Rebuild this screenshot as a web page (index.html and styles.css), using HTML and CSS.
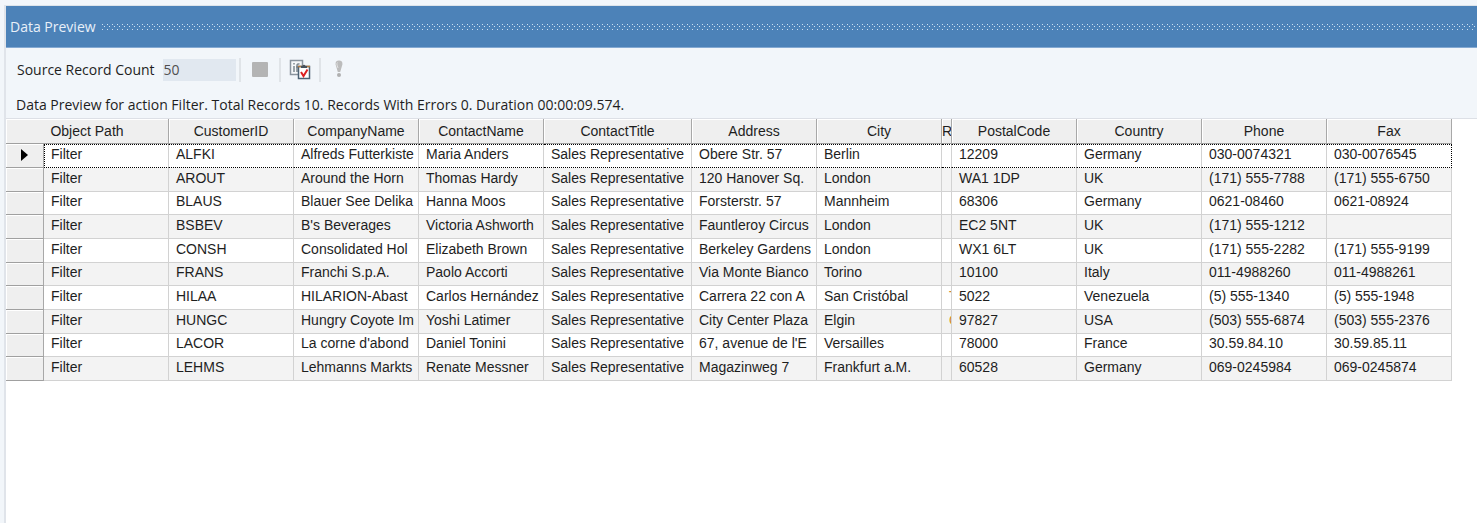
FILE: index.html
```html
<!DOCTYPE html>
<html lang="en">
<head>
    <meta charset="UTF-8">
    <meta name="viewport" content="width=device-width, initial-scale=1.0">
    <title>Data Preview</title>
    <link rel="stylesheet" href="styles.css">
</head>
<body>
    <div class="panel">
        <div class="panel-header">
            <h1>Data Preview</h1>
            <div class="grip"></div>
        </div>

        <div class="toolbar">
            <label for="record-count">Source Record Count</label>
            <input id="record-count" class="count" type="text" value="50" readonly>
            <span class="separator"></span>
            <button class="tool" type="button" aria-label="Stop">
                <svg width="20" height="22" viewBox="0 0 20 22">
                    <rect x="2" y="3" width="16" height="15" rx="1" fill="#b4b4b4"/>
                </svg>
            </button>
            <span class="separator"></span>
            <button class="tool" type="button" aria-label="Verify">
                <svg width="22" height="22" viewBox="0 0 22 22">
                    <rect x="1.5" y="1.5" width="12" height="14" fill="#f6f8fa" stroke="#8a949e" stroke-width="1.5"/>
                    <path d="M5 4v1.500M5 7v6M8 13V6.500q0-2 2.500-1.500M7 8h3" fill="none" stroke="#7c868e" stroke-width="1.500"/>
                    <rect x="9.500" y="7.500" width="11" height="12" fill="#fff" stroke="#4c6274" stroke-width="1.500"/>
                    <path d="M9 7.500h12" stroke="#b07a40" stroke-width="1.500"/>
                    <path d="M12 9V7h1.500Q15 4.500 16.500 7H18V9z" fill="#46515c"/>
                    <path d="M12 13l2.500 4L18.500 10.500" fill="none" stroke="#dc2020" stroke-width="2"/>
                </svg>
            </button>
            <span class="separator"></span>
            <button class="tool" type="button" aria-label="Errors">
                <svg width="20" height="22" viewBox="0 0 20 22">
                    <path d="M9 1.500c-2.500 0-3.800 1.500-3.400 4L7.800 13h2.400l2.200-7.500c.4-2.500-.9-4-3.400-4z" fill="#bcbcbc"/>
                    <path d="M7.500 3.500q-1 1-.5 2.500l1 3" fill="none" stroke="#e2e2e2"/>
                    <circle cx="9" cy="16" r="2" fill="#b0b0b0"/>
                </svg>
            </button>
        </div>

        <p class="status">Data Preview for action Filter. Total Records 10. Records With Errors 0. Duration 00:00:09.574.</p>

        <div class="grid">
            <table>
                <colgroup>
                    <col class="col-marker">
                    <col class="col-text">
                    <col class="col-text">
                    <col class="col-text">
                    <col class="col-text">
                    <col class="col-title">
                    <col class="col-text">
                    <col class="col-text">
                    <col class="col-region">
                    <col class="col-text">
                    <col class="col-text">
                    <col class="col-text">
                    <col class="col-text">
                </colgroup>
                <thead>
                    <tr>
                        <th colspan="2">Object Path</th>
                        <th>CustomerID</th>
                        <th>CompanyName</th>
                        <th>ContactName</th>
                        <th>ContactTitle</th>
                        <th>Address</th>
                        <th>City</th>
                        <th class="narrow">R</th>
                        <th>PostalCode</th>
                        <th>Country</th>
                        <th>Phone</th>
                        <th>Fax</th>
                    </tr>
                </thead>
                <tbody>
                    <tr class="current">
                        <th><svg width="7" height="12" viewBox="0 0 7 12"><path d="M0 0l7 6-7 6z"/></svg></th>
                        <td>Filter</td><td>ALFKI</td><td>Alfreds Futterkiste</td><td>Maria Anders</td><td>Sales Representative</td><td>Obere Str. 57</td><td>Berlin</td><td></td><td>12209</td><td>Germany</td><td>030-0074321</td><td>030-0076545</td>
                    </tr>
                    <tr>
                        <th></th>
                        <td>Filter</td><td>AROUT</td><td>Around the Horn</td><td>Thomas Hardy</td><td>Sales Representative</td><td>120 Hanover Sq.</td><td>London</td><td></td><td>WA1 1DP</td><td>UK</td><td>(171) 555-7788</td><td>(171) 555-6750</td>
                    </tr>
                    <tr>
                        <th></th>
                        <td>Filter</td><td>BLAUS</td><td>Blauer See Delika</td><td>Hanna Moos</td><td>Sales Representative</td><td>Forsterstr. 57</td><td>Mannheim</td><td></td><td>68306</td><td>Germany</td><td>0621-08460</td><td>0621-08924</td>
                    </tr>
                    <tr>
                        <th></th>
                        <td>Filter</td><td>BSBEV</td><td>B's Beverages</td><td>Victoria Ashworth</td><td>Sales Representative</td><td>Fauntleroy Circus</td><td>London</td><td></td><td>EC2 5NT</td><td>UK</td><td>(171) 555-1212</td><td></td>
                    </tr>
                    <tr>
                        <th></th>
                        <td>Filter</td><td>CONSH</td><td>Consolidated Hol</td><td>Elizabeth Brown</td><td>Sales Representative</td><td>Berkeley Gardens</td><td>London</td><td></td><td>WX1 6LT</td><td>UK</td><td>(171) 555-2282</td><td>(171) 555-9199</td>
                    </tr>
                    <tr>
                        <th></th>
                        <td>Filter</td><td>FRANS</td><td>Franchi S.p.A.</td><td>Paolo Accorti</td><td>Sales Representative</td><td>Via Monte Bianco</td><td>Torino</td><td></td><td>10100</td><td>Italy</td><td>011-4988260</td><td>011-4988261</td>
                    </tr>
                    <tr>
                        <th></th>
                        <td>Filter</td><td>HILAA</td><td>HILARION-Abast</td><td>Carlos Hernández</td><td>Sales Representative</td><td>Carrera 22 con A</td><td>San Cristóbal</td><td class="region">T</td><td>5022</td><td>Venezuela</td><td>(5) 555-1340</td><td>(5) 555-1948</td>
                    </tr>
                    <tr>
                        <th></th>
                        <td>Filter</td><td>HUNGC</td><td>Hungry Coyote Im</td><td>Yoshi Latimer</td><td>Sales Representative</td><td>City Center Plaza</td><td>Elgin</td><td class="region">O</td><td>97827</td><td>USA</td><td>(503) 555-6874</td><td>(503) 555-2376</td>
                    </tr>
                    <tr>
                        <th></th>
                        <td>Filter</td><td>LACOR</td><td>La corne d'abond</td><td>Daniel Tonini</td><td>Sales Representative</td><td>67, avenue de l'E</td><td>Versailles</td><td></td><td>78000</td><td>France</td><td>30.59.84.10</td><td>30.59.85.11</td>
                    </tr>
                    <tr>
                        <th></th>
                        <td>Filter</td><td>LEHMS</td><td>Lehmanns Markts</td><td>Renate Messner</td><td>Sales Representative</td><td>Magazinweg 7</td><td>Frankfurt a.M.</td><td></td><td>60528</td><td>Germany</td><td>069-0245984</td><td>069-0245874</td>
                    </tr>
                </tbody>
            </table>
        </div>
    </div>
</body>
</html>
```
FILE: styles.css
```css
* {
    box-sizing: border-box;
}
body {
    margin: 0;
    padding: 5px 0 0 4px;
    height: 100vh;
    overflow: hidden;
    background-color: #f2f6fa;
    color: #1e1e1e;
    font-family: "Open Sans", sans-serif;
    font-size: 14px;
}
.panel {
    display: flex;
    flex-direction: column;
    height: 100%;
    border-top: 1px solid #dde4ea;
    border-left: 2px solid #e0e4ea;
}
.panel-header {
    display: flex;
    align-items: center;
    gap: 6px;
    height: 42px;
    padding-left: 4px;
    background-color: #4c82b8;
    border-bottom: 1px solid #84a9d2;
}
.panel-header h1 {
    margin: 0;
    color: #e8f0f8;
    font-size: 14px;
    font-weight: normal;
}
/* three staggered rows of dots */
.grip {
    --dots: linear-gradient(90deg, #cfe2f2 1px, transparent 1px);
    flex: 1;
    height: 6px;
    background-image: var(--dots), var(--dots), var(--dots);
    background-size: 5px 1px;
    background-repeat: repeat-x;
    background-position: 0 0, 2px 2px, 0 5px;
}
.toolbar {
    display: flex;
    align-items: center;
    height: 43px;
    padding-left: 11px;
}
.count {
    width: 73px;
    height: 22px;
    margin: 0 3px 0 8px;
    padding: 0 1px;
    border: none;
    background-color: #e1e8f0;
    color: #505050;
    font-family: inherit;
    font-size: 14px;
}
.separator {
    width: 2px;
    height: 24px;
    background-color: #e0e4e8;
}
.tool {
    display: flex;
    align-items: center;
    justify-content: center;
    width: 38px;
    height: 24px;
    padding: 0;
    border: none;
    background: none;
}
.status {
    margin: 0;
    padding: 4px 10px;
    height: 27px;
    line-height: 20px;
    white-space: nowrap;
}
.grid {
    flex: 1;
    overflow: hidden;
    background-color: #fff;
    border-top: 1px solid #dde0e6;
    font-family: "Liberation Sans", Arial, sans-serif;
    line-height: 16px;
}
table {
    table-layout: fixed;
    width: 1446px;
    border-collapse: separate;
    border-spacing: 0;
}
.col-marker {
    width: 38px;
}
.col-text {
    width: 125px;
}
.col-title {
    width: 148px;
}
.col-region {
    width: 10px;
}
th,
td {
    height: 24px;
    overflow: hidden;
    white-space: nowrap;
}
th {
    padding: 0;
    background-color: #efefef;
    border-right: 1px solid #a8a8a8;
    border-bottom: 1px solid #a0a0a0;
    box-shadow: inset 1px 1px #fff;
    font-weight: normal;
}
thead th {
    height: 25px;
}
.narrow {
    text-align: left;
}
td {
    padding: 0 0 4px 7px;
    background-color: #fff;
    border-right: 1px solid #d2d2d2;
    border-bottom: 1px solid #d2d2d2;
}
tbody tr:nth-child(even) td {
    background-color: #f3f3f3;
}
tbody tr:nth-child(3n) th,
tbody tr:nth-child(3n) td {
    height: 23px;
}
.region {
    color: #d08a30;
}
.current td {
    border-top: 1px dotted #000;
    border-bottom: 1px dotted #000;
}
.current td:nth-child(2) {
    border-left: 1px dotted #000;
    padding-left: 6px;
}
.current td:last-child {
    border-right: 1px dotted #000;
}
```
